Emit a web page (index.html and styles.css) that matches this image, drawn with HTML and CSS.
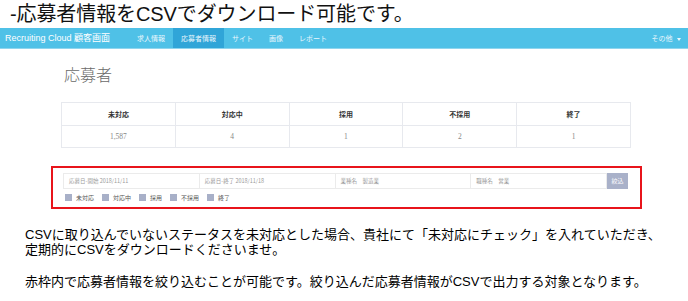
FILE: index.html
```html
<!DOCTYPE html>
<html lang="ja">
<head>
<meta charset="utf-8">
<title>応募者</title>
<link rel="stylesheet" href="styles.css">
</head>
<body>
<div class="title">-応募者情報をCSVでダウンロード可能です。</div>
<nav class="nav">
  <div class="brand">Recruiting Cloud 顧客画面</div>
  <div class="nav-item">求人情報</div>
  <div class="nav-item active">応募者情報</div>
  <div class="nav-item">サイト</div>
  <div class="nav-item">画像</div>
  <div class="nav-item">レポート</div>
  <div class="nav-spacer"></div>
  <div class="nav-item other">その他 <span class="caret"></span></div>
</nav>
<main class="main">
  <h1 class="heading">応募者</h1>
  <table class="stats">
    <thead>
      <tr><th>未対応</th><th>対応中</th><th>採用</th><th>不採用</th><th>終了</th></tr>
    </thead>
    <tbody>
      <tr><td>1,587</td><td>4</td><td>1</td><td>2</td><td>1</td></tr>
    </tbody>
  </table>
  <div class="filter">
    <div class="inputs">
      <div class="field">応募日-開始 2018/11/11</div>
      <div class="field">応募日-終了 2018/11/18</div>
      <div class="field">業種名　製造業</div>
      <div class="field">職種名　営業</div>
      <div class="btn">絞込</div>
    </div>
    <div class="checks">
      <span class="check"><span class="box"></span>未対応</span>
      <span class="check"><span class="box"></span>対応中</span>
      <span class="check"><span class="box"></span>採用</span>
      <span class="check"><span class="box"></span>不採用</span>
      <span class="check"><span class="box"></span>終了</span>
    </div>
  </div>
</main>
<section class="notes">
  <p class="line">CSVに取り込んでいないステータスを未対応とした場合、貴社にて「未対応にチェック」を入れていただき、</p>
  <p class="line">定期的にCSVをダウンロードくださいませ。</p>
  <p class="line gap">赤枠内で応募者情報を絞り込むことが可能です。絞り込んだ応募者情報がCSVで出力する対象となります。</p>
</section>
</body>
</html>
```
FILE: styles.css
```css
* { box-sizing: border-box; }
body {
  margin: 0;
  width: 688px;
  background: #fff;
  font-family: "Noto Sans CJK JP", "Noto Sans", sans-serif;
  color: #000;
}
.title {
  height: 28px;
  line-height: 28px;
  padding-left: 10px;
  font-size: 20px;
  font-family: "Liberation Sans", "Noto Sans CJK JP", sans-serif;
  color: #111;
  letter-spacing: -0.1px;
  white-space: nowrap;
}
.nav {
  display: flex;
  height: 21px;
  background: #4fc1e7;
  border-bottom: 1px solid #8fd5ee;
}
.brand {
  width: 129px;
  padding-left: 5px;
  line-height: 20px;
  font-size: 9px;
  font-family: "Liberation Sans", "Noto Sans CJK JP", sans-serif;
  color: #fff;
  white-space: nowrap;
}
.nav-item {
  padding: 0 8px;
  line-height: 20px;
  font-size: 7px;
  color: #eaf7fd;
  white-space: nowrap;
}
.nav-item.active { background: #30a5d8; }
.nav-spacer { flex: 1; }
.nav-item.other { padding-right: 7px; }
.caret {
  display: inline-block;
  width: 0; height: 0;
  margin-left: 3px;
  vertical-align: middle;
  border-left: 2.5px solid transparent;
  border-right: 2.5px solid transparent;
  border-top: 3px solid #eaf7fd;
}
.main {
  padding-left: 51px;
}
.heading {
  margin: 15px 0 18px 13px;
  font-size: 16px;
  line-height: 20px;
  font-weight: 300;
  color: #6a6a6a;
}
.stats {
  margin-left: 10px;
  width: 570px;
  border-collapse: collapse;
  table-layout: fixed;
  font-size: 7px;
}
.stats th, .stats td {
  border: 1px solid #e7e9ee;
  text-align: center;
  padding: 0;
}
.stats th {
  height: 23px;
  font-weight: bold;
  color: #333;
}
.stats td {
  height: 22px;
  color: #888;
  font-family: "Liberation Serif", serif;
  font-size: 7.5px;
}
.filter {
  margin-top: 18px;
  width: 591px;
  height: 43px;
  border: 2px solid #e8141b;
  padding: 5px 12px 0 10px;
}
.inputs {
  display: flex;
  height: 16px;
}
.field {
  flex: 1;
  border: 1px solid #ebebeb;
  margin-right: -1px;
  padding-left: 5px;
  font-size: 5.5px;
  line-height: 14px;
  color: #9a9a9a;
  white-space: nowrap;
}
.btn {
  width: 21px;
  margin-left: 1px;
  background: #a9b1c9;
  color: #fff;
  font-size: 6px;
  line-height: 16px;
  text-align: center;
}
.checks {
  display: flex;
  gap: 8px;
  margin-top: 4px;
  padding-left: 2px;
  font-size: 6px;
  line-height: 9px;
  color: #555;
}
.check {
  display: flex;
  align-items: center;
}
.box {
  width: 7px;
  height: 7px;
  margin-right: 4px;
  background: #a8b0c8;
}
.notes {
  margin-top: 18px;
  padding-left: 25px;
  font-size: 13px;
  font-family: "Liberation Sans", "Noto Sans CJK JP", sans-serif;
  color: #000;
}
.line {
  margin: 0;
  height: 15px;
  line-height: 15px;
  white-space: nowrap;
}
.line.gap { margin-top: 17px; }
```
